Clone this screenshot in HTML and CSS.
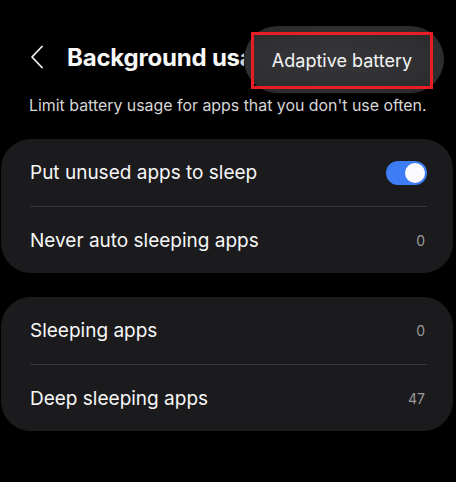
FILE: index.html
```html
<!DOCTYPE html>
<html lang="en">
<head>
    <meta charset="UTF-8">
    <meta name="viewport" content="width=device-width, initial-scale=1.0">
    <title>Background usage limits</title>
    <link rel="stylesheet" href="styles.css">
</head>
<body>
    <div class="screen">
        <div class="header">
            <svg class="back" width="14" height="24" viewBox="0 0 14 24">
                <path d="M12 1.5 L2 12 L12 22.5" fill="none" stroke="#f2f2f2" stroke-width="1.8" stroke-linecap="round" stroke-linejoin="round"/>
            </svg>
            <h1 class="title">Background usage limits</h1>
        </div>

        <!-- tooltip that sits over the title -->
        <div class="tooltip">
            <div class="tooltip-box">Adaptive battery</div>
        </div>

        <p class="subtitle">Limit battery usage for apps that you don't use often.</p>

        <div class="card">
            <div class="row">
                <span class="label">Put unused apps to sleep</span>
                <span class="toggle"><span class="knob"></span></span>
            </div>
            <div class="divider"></div>
            <div class="row">
                <span class="label">Never auto sleeping apps</span>
                <span class="value">0</span>
            </div>
        </div>

        <div class="card">
            <div class="row">
                <span class="label">Sleeping apps</span>
                <span class="value">0</span>
            </div>
            <div class="divider"></div>
            <div class="row">
                <span class="label">Deep sleeping apps</span>
                <span class="value">47</span>
            </div>
        </div>
    </div>
</body>
</html>
```

FILE: styles.css
```css
body {
    margin: 0;
    padding: 0;
    background-color: #000;
    font-family: Inter, Roboto, "Noto Sans", sans-serif;
    color: #f7f7f7;
}
.screen {
    position: relative;
    width: 456px;
    height: 482px;
    overflow: hidden;
}
.header {
    display: flex;
    align-items: center;
    height: 48px;
    padding: 33px 0 0 30px;
    white-space: nowrap;
}
.back {
    flex: none;
}
.title {
    width: 177px;
    overflow: hidden;
    margin: 0 0 0 23px;
    font-size: 24px;
    font-weight: 700;
    letter-spacing: -0.2px;
}
.tooltip {
    position: absolute;
    left: 244px;
    top: 26px;
    width: 200px;
    height: 67px;
    border-radius: 34px;
    background: radial-gradient(ellipse at 45% 50%, #36363a 0%, #303033 55%, #28282a 100%);
    box-shadow: 0 2px 6px rgba(0, 0, 0, 0.5);
}
.tooltip-box {
    position: absolute;
    left: 7px;
    top: 6px;
    width: 176px;
    height: 51px;
    border: 3px solid #e81d25;
    display: flex;
    align-items: center;
    justify-content: center;
    font-size: 18px;
    color: #f4f4f4;
}
.subtitle {
    margin: 15px 0 0 29px;
    font-size: 15.9px;
    color: #d6d6d6;
    white-space: nowrap;
}
.card {
    margin: 24px 3px 21px 1px;
    background-color: #1b1b1d;
    border-radius: 30px;
}
.row {
    display: flex;
    align-items: center;
    justify-content: space-between;
    height: 66px;
    padding: 0 28px 0 29px;
}
.card .row:first-child {
    height: 67px;
}
.label {
    font-size: 19px;
    color: #f7f7f7;
}
.value {
    font-size: 14px;
    color: #9a9a9c;
}
.divider {
    height: 1px;
    margin: 0 26px 0 29px;
    background-color: #38383a;
}
.toggle {
    position: relative;
    width: 41px;
    height: 24px;
    margin-right: -2px;
    border-radius: 12px;
    background-color: #3d7cf4;
}
.knob {
    position: absolute;
    right: 2px;
    top: 2px;
    width: 20px;
    height: 20px;
    border-radius: 50%;
    background-color: #fbfbff;
}
```
